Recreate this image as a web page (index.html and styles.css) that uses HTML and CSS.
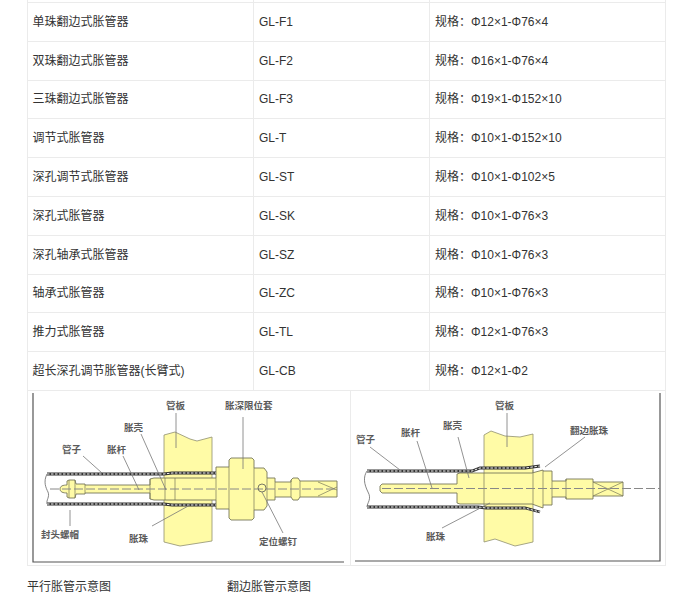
FILE: index.html
```html
<!DOCTYPE html>
<html lang="zh">
<head>
<meta charset="utf-8">
<title>胀管器</title>
<link rel="stylesheet" href="styles.css">
</head>
<body>
<main class="page">
<table class="spec">
<colgroup><col class="c1"><col class="c2"><col class="c3"></colgroup>
<tbody>
<tr class="stub"><td></td><td></td><td></td></tr>
<tr><td>单珠翻边式胀管器</td><td>GL-F1</td><td>规格：Φ12×1-Φ76×4</td></tr>
<tr><td>双珠翻边式胀管器</td><td>GL-F2</td><td>规格：Φ16×1-Φ76×4</td></tr>
<tr><td>三珠翻边式胀管器</td><td>GL-F3</td><td>规格：Φ19×1-Φ152×10</td></tr>
<tr><td>调节式胀管器</td><td>GL-T</td><td>规格：Φ10×1-Φ152×10</td></tr>
<tr><td>深孔调节式胀管器</td><td>GL-ST</td><td>规格：Φ10×1-Φ102×5</td></tr>
<tr><td>深孔式胀管器</td><td>GL-SK</td><td>规格：Φ10×1-Φ76×3</td></tr>
<tr><td>深孔轴承式胀管器</td><td>GL-SZ</td><td>规格：Φ10×1-Φ76×3</td></tr>
<tr><td>轴承式胀管器</td><td>GL-ZC</td><td>规格：Φ10×1-Φ76×3</td></tr>
<tr><td>推力式胀管器</td><td>GL-TL</td><td>规格：Φ12×1-Φ76×3</td></tr>
<tr><td>超长深孔调节胀管器(长臂式)</td><td>GL-CB</td><td>规格：Φ12×1-Φ2</td></tr>
</tbody>
</table>
<div class="figures">
<div class="figure">
<svg class="diagram" viewBox="28 391 322 174" width="322" height="174">
<path class="frame" d="M33 393V562H344"/>
<path class="plate" d="M164 435L175 432L190 439L197 441L212 437V541L180 546L164 542Z"/>
<path class="tube-end" d="M47 474C43 482 46 488 48 492C50 497 46 500 47 504"/>
<path class="part" d="M60 489C60 486 63 485 67 485V481L69 480H75L76 484H85V485H150V479L154 478H216V467H229V460L231 458H252L254 460V468H264L267 472V478H275V482H291V480L293 478H298L300 481H337V497H300L298 500H293L291 497H275V500H267V506L264 510H254V518L252 520H231L229 518V509H216V500H154L150 499V493H85V494H76L75 498H69L67 497V493C63 493 60 492 60 489Z"/>
<path class="inner" d="M69 480V498M75 480V498M85 485V493M150 479V499M165 478V500M175 478V500M216 478V500M229 467V509M254 468V510M267 478V500M275 482V497M291 480V497M300 481V497M318 482L337 490M318 496L337 487"/>
<path class="band" d="M47 474H164L172 473H216"/>
<path class="band-w" d="M47 474H164L172 473H216"/>
<path class="band" d="M47 504H164L172 505H216"/>
<path class="band-w" d="M47 504H164L172 505H216"/>
<path class="dash" d="M50 489H337"/>
<circle class="inner-c" cx="262" cy="488" r="4"/>
<path class="lead" d="M176 413V448M243 417V469M141 434L166 490M83 456L102 473M123 456L139 490M70 510V526M152 526L190 505M262 492L283 533"/>
<text class="label" x="166" y="409">管板</text>
<text class="label" x="225" y="409">胀深限位套</text>
<text class="label" x="124" y="431">胀壳</text>
<text class="label" x="62" y="453">管子</text>
<text class="label" x="107" y="453">胀杆</text>
<text class="label" x="41" y="538">封头螺帽</text>
<text class="label" x="129" y="542">胀珠</text>
<text class="label" x="259" y="545">定位螺钉</text>
</svg>
</div>
<div class="figure">
<svg class="diagram" viewBox="351 391 315 174" width="315" height="174">
<path class="frame" d="M660 393V561H355"/>
<path class="plate" d="M484 435L491 431L505 436L520 437L533 434V542L515 546L495 539L484 542Z"/>
<path class="tube-end" d="M367 471C363 477 364 484 368 492C372 499 367 503 367 507"/>
<path class="part" d="M380 486L382 484H457V474L460 473H532L543 470V471H552V481H566V479H593V482H623V496H593V499H566V497H552V505H543V508L532 504H460L457 503V493H382L380 491Z"/>
<path class="inner" d="M484 473V504M533 470V504M543 471V505M552 481V497M566 479V499M593 482V496M593 482L623 496M593 496L623 482"/>
<path class="band" d="M367 471H472L480 468H525L540 466"/>
<path class="band-w" d="M367 471H472L480 468H525L540 466"/>
<path class="band" d="M367 507H478L486 508H525L540 512"/>
<path class="band-w" d="M367 507H478L486 508H525L540 512"/>
<path class="dash" d="M382 488.5H660"/>
<path class="lead" d="M507 413V447M458 437L469 478M417 441L432 488M370 447L400 470M585 437L545 467M442 528L490 503"/>
<text class="label" x="495" y="409">管板</text>
<text class="label" x="443" y="429">胀壳</text>
<text class="label" x="401" y="436">胀杆</text>
<text class="label" x="356" y="443">管子</text>
<text class="label" x="570" y="434">翻边胀珠</text>
<text class="label" x="426" y="540">胀珠</text>
</svg>
</div>
</div>
<div class="captions">
<p class="caption">平行胀管示意图</p>
<p class="caption">翻边胀管示意图</p>
</div>
</main>
</body>
</html>
```
FILE: styles.css
```css
html, body {
  margin: 0;
  padding: 0;
  background: #fff;
}
body {
  font-family: "Liberation Sans", "Noto Sans CJK SC", sans-serif;
  font-size: 12px;
  color: #333;
}
.page {
  width: 639px;
  margin-left: 27px;
}
.spec {
  width: 638px;
  table-layout: fixed;
  border-collapse: collapse;
}
.c1 { width: 226px; }
.c2 { width: 176px; }
.c3 { width: 236px; }
.spec td {
  height: 38.8px;
  padding: 0 5px;
  box-sizing: border-box;
  border: 1px solid #ebebeb;
  line-height: 16px;
}
.spec td:first-child {
  padding-left: 4.5px;
}
.spec .stub td {
  height: 2.5px;
  border-top: 0;
}
.figures {
  display: flex;
  width: 639px;
  height: 175px;
  box-sizing: border-box;
  border: 1px solid #ebebeb;
  border-top: 0;
}
.figure {
  height: 174px;
}
.figure:first-child {
  width: 322px;
  border-right: 1px solid #ebebeb;
}
.diagram {
  display: block;
}
.frame {
  fill: none;
  stroke: #555;
  stroke-width: 1.2;
}
.plate {
  fill: #fffba6;
  stroke: #8f8f70;
  stroke-width: 0.8;
}
.part {
  fill: #fffba6;
  stroke: #77775a;
  stroke-width: 0.9;
}
.inner {
  fill: none;
  stroke: #77775a;
  stroke-width: 0.7;
}
.inner-c {
  fill: none;
  stroke: #555;
  stroke-width: 0.8;
}
.dash {
  fill: none;
  stroke: #888;
  stroke-width: 1;
  stroke-dasharray: 9 3;
}
.band {
  fill: none;
  stroke: #333;
  stroke-width: 2.8;
}
.band-w {
  fill: none;
  stroke: #f4f4f4;
  stroke-width: 1;
  stroke-dasharray: 2.5 1.5;
}
.tube-end {
  fill: none;
  stroke: #666;
  stroke-width: 0.8;
}
.lead {
  fill: none;
  stroke: #777;
  stroke-width: 0.8;
}
.label {
  font-family: "Noto Sans CJK SC", sans-serif;
  font-size: 9.5px;
  font-weight: 700;
  fill: #5a5a5a;
}
.captions {
  display: flex;
  margin-top: 14px;
}
.caption {
  width: 200px;
  margin: 0;
  font-size: 12px;
  line-height: 14px;
  color: #333;
}
```
